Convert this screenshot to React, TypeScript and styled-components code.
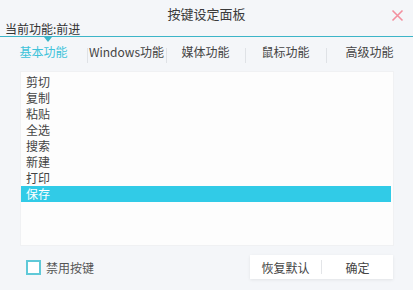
import React, { useState } from 'react';
import styled, { createGlobalStyle } from 'styled-components';

const GlobalStyle = createGlobalStyle`
  html, body {
    margin: 0;
    padding: 0;
    background: #f4f6f9;
  }
  body {
    font-family: 'Noto Sans CJK SC', 'Noto Sans', sans-serif;
  }
`;

const Panel = styled.div`
  width: 413px;
  height: 290px;
  background: #f4f6f9;
  display: flex;
  flex-direction: column;
  color: #444;
  overflow: hidden;
`;

const TitleBar = styled.div`
  position: relative;
  height: 22px;
  display: flex;
  align-items: flex-end;
  justify-content: center;
  font-size: 13px;
  line-height: 17px;
  color: #3a3a3a;
`;

const CloseButton = styled.button`
  position: absolute;
  right: 8px;
  top: 8px;
  width: 15px;
  height: 15px;
  border: none;
  background: transparent;
  padding: 0;
  cursor: pointer;
  display: flex;
`;

const CurrentRow = styled.div`
  position: relative;
  height: 14px;
  padding-left: 5px;
  font-size: 12px;
  line-height: 14px;
  color: #333;
  border-bottom: 1px solid #3cb5c8;
`;

const Pointer = styled.span<{ $left: number }>`
  position: absolute;
  left: ${p => p.$left}px;
  top: 15px;
  width: 0;
  height: 0;
  border-left: 4px solid transparent;
  border-right: 4px solid transparent;
  border-top: 5px solid #3cb5c8;
`;

const Tabs = styled.div`
  display: grid;
  grid-template-columns: 87px 79px 79px 81px 1fr;
  height: 27px;
  margin-top: 3px;
`;

const Tab = styled.div<{ $active: boolean; $first?: boolean }>`
  position: relative;
  display: flex;
  align-items: center;
  justify-content: center;
  font-size: 12px;
  color: ${p => (p.$active ? '#3ec3da' : '#444')};
  cursor: pointer;
  padding-bottom: 4px;

  ${p =>
    !p.$first &&
    `&::before {
      content: '';
      position: absolute;
      left: 0;
      top: 8px;
      height: 15px;
      width: 1px;
      background: #dfe2e6;
    }`}
`;

const ListBox = styled.div`
  margin: 5px 20px 0 21px;
  height: 173px;
  background: #fdfdfd;
  box-shadow: 0 0 0 1px #f0f1f3;
  padding-top: 2px;
  box-sizing: border-box;
  overflow: hidden;
`;

const Item = styled.div<{ $selected: boolean }>`
  height: 16px;
  line-height: 16px;
  font-size: 12px;
  padding-left: 5px;
  margin-right: 2px;
  color: ${p => (p.$selected ? '#fff' : '#444')};
  background: ${p => (p.$selected ? '#31cbe7' : 'transparent')};
  cursor: default;
`;

const Footer = styled.div`
  display: flex;
  align-items: center;
  justify-content: space-between;
  padding: 10px 20px 0 26px;
`;

const CheckLabel = styled.label`
  display: flex;
  align-items: center;
  gap: 5px;
  font-size: 12px;
  color: #555;
  margin-top: 1px;
`;

const Box = styled.span`
  width: 11px;
  height: 11px;
  border: 2px solid #5fc9d8;
  background: #fff;
  display: inline-block;
`;

const ButtonGroup = styled.div`
  display: flex;
  align-items: center;
  height: 24px;
  width: 143px;
  background: #fff;
  box-shadow: 0 1px 3px rgba(0, 0, 0, 0.08);
`;

const Button = styled.button`
  flex: 1;
  height: 100%;
  border: none;
  background: transparent;
  font-family: inherit;
  font-size: 12px;
  color: #444;
  cursor: pointer;
  padding: 0;
`;

const Divider = styled.span`
  width: 1px;
  height: 14px;
  background: #e3e5e8;
`;

const tabs = ['基本功能', 'Windows功能', '媒体功能', '鼠标功能', '高级功能'];
const items = ['剪切', '复制', '粘贴', '全选', '搜索', '新建', '打印', '保存'];

export default function App() {
  const [active, setActive] = useState(0);
  const [selected, setSelected] = useState(7);
  const [disabled, setDisabled] = useState(false);

  return (
    <>
      <GlobalStyle />
      <Panel>
        <TitleBar>
          按键设定面板
          <CloseButton aria-label="close">
            <svg width="15" height="15" viewBox="0 0 15 15">
              <path d="M2.5 2.5 L12.5 12.5 M12.5 2.5 L2.5 12.5" stroke="#f3909f" strokeWidth="1.6" fill="none" />
            </svg>
          </CloseButton>
        </TitleBar>
        <CurrentRow>
          当前功能:前进
          <Pointer $left={44} />
        </CurrentRow>
        <Tabs>
          {tabs.map((t, i) => (
            <Tab key={t} $active={i === active} $first={i === 0} onClick={() => setActive(i)}>
              {t}
            </Tab>
          ))}
        </Tabs>
        <ListBox>
          {items.map((it, i) => (
            <Item key={it} $selected={i === selected} onClick={() => setSelected(i)}>
              {it}
            </Item>
          ))}
        </ListBox>
        <Footer>
          <CheckLabel onClick={() => setDisabled(!disabled)}>
            <Box />
            禁用按键
          </CheckLabel>
          <ButtonGroup>
            <Button>恢复默认</Button>
            <Divider />
            <Button>确定</Button>
          </ButtonGroup>
        </Footer>
      </Panel>
    </>
  );
}
